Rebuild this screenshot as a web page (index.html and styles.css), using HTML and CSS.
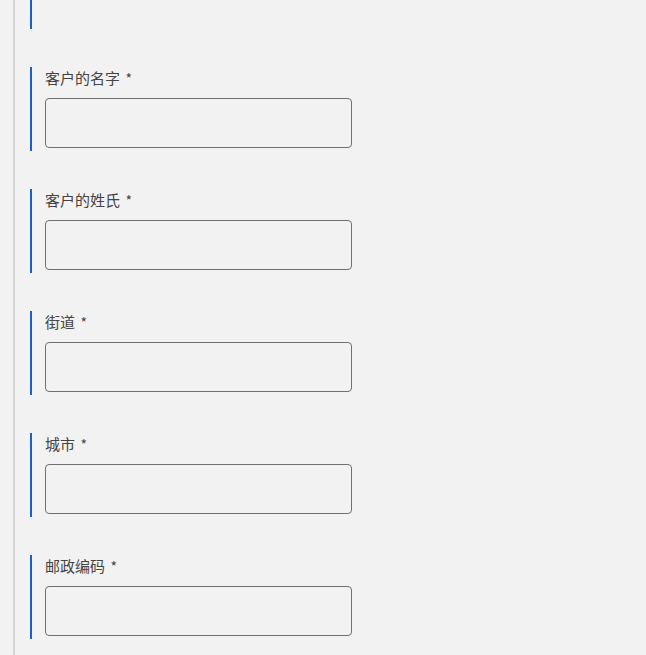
FILE: index.html
```html
<!DOCTYPE html>
<html lang="zh-CN">
<head>
  <meta charset="UTF-8">
  <meta name="viewport" content="width=device-width, initial-scale=1.0">
  <title>客户信息</title>
  <link rel="stylesheet" href="styles.css">
</head>
<body>

  <div class="page">
    <form class="form">
      <div class="field field-cut"></div>

      <div class="field">
        <label for="firstName">客户的名字 <span class="req">*</span></label>
        <input type="text" id="firstName">
      </div>

      <div class="field">
        <label for="lastName">客户的姓氏 <span class="req">*</span></label>
        <input type="text" id="lastName">
      </div>

      <div class="field">
        <label for="street">街道 <span class="req">*</span></label>
        <input type="text" id="street">
      </div>

      <div class="field">
        <label for="city">城市 <span class="req">*</span></label>
        <input type="text" id="city">
      </div>

      <div class="field">
        <label for="zip">邮政编码 <span class="req">*</span></label>
        <input type="text" id="zip">
      </div>
    </form>
  </div>

</body>
</html>
```

FILE: styles.css
```css
html, body {
  margin: 0;
  padding: 0;
  height: 100%;
}

body {
  font-family: 'Noto Sans CJK SC', 'Noto Sans', sans-serif;
  background-color: #f2f2f2;
  color: #444;
  overflow: hidden;
}

.page {
  margin-left: 13px;
  border-left: 2px solid #d4d4d4;
  min-height: 100%;
  padding-left: 15px;
}

.form {
  display: flex;
  flex-direction: column;
  gap: 38px;
}

.field {
  border-left: 2px solid #1a5fd2;
  padding-left: 13px;
  height: 84px;
  display: flex;
  flex-direction: column;
}

.field-cut {
  height: 29px;
}

label {
  display: block;
  height: 22px;
  font-size: 15px;
  line-height: 22px;
  margin-bottom: 9px;
  color: #444;
  word-spacing: 2px;
}

.req {
  font-size: 14px;
}

input {
  box-sizing: border-box;
  width: 307px;
  height: 50px;
  background: transparent;
  border: 1px solid #6f6f6f;
  border-radius: 4px;
  font-size: 15px;
  padding: 0 10px;
}
```
